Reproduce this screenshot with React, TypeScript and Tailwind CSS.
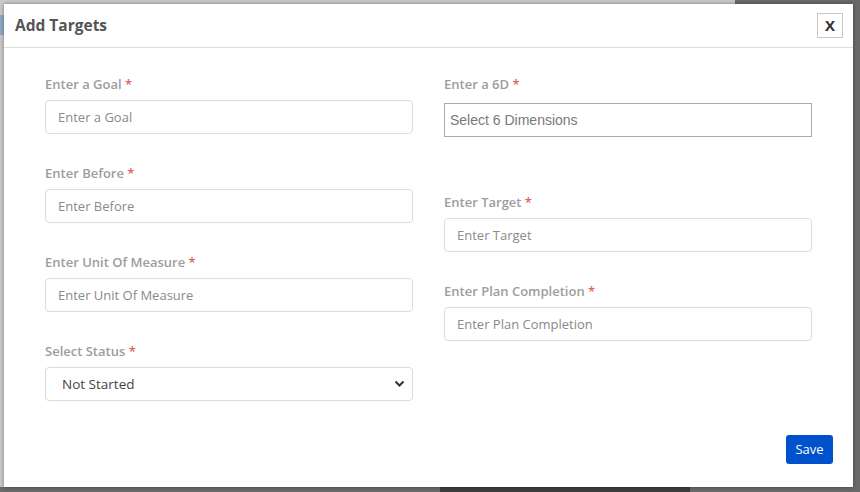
import React from "react";

const font = { fontFamily: '"Open Sans", "Noto Sans", Arial, sans-serif' };

function Label({ text }: { text: string }) {
  return (
    <label className="block h-[20px] text-[13px] leading-[20px] font-semibold text-[#9d9d9d] mb-[6px]">
      {text} <span className="text-[#e06262]">*</span>
    </label>
  );
}

function Field({ label, placeholder, className = "" }: { label: string; placeholder: string; className?: string }) {
  return (
    <div className={className}>
      <Label text={label} />
      <input
        placeholder={placeholder}
        className="block w-full h-[34px] rounded-[4px] border border-[#dcdcdc] px-[12px] text-[13px] text-[#555] placeholder:text-[#8a8a8a] outline-none"
      />
    </div>
  );
}

export default function App() {
  return (
    <div className="w-[860px] h-[492px] bg-[#6a6a6a] relative overflow-hidden" style={font}>
      <div className="absolute left-0 top-0 w-[735px] h-[487px] bg-[#c9c9c9]" />
      <div className="absolute left-0 top-[15px] w-[4px] h-[20px] bg-[#8fa9c4]" />
      <div className="absolute left-[440px] top-[487px] w-[250px] h-[5px] bg-[#3d3d3d]" />
      <div className="absolute left-[4px] top-[4px] w-[849px] h-[483px] bg-white shadow-[0_0_4px_rgba(0,0,0,0.4)] flex flex-col">
        <div className="h-[44px] border-b border-[#dedede] flex items-center justify-between pl-[11px] pr-[10px]">
          <h2 className="text-[15.5px] font-bold text-[#555]">Add Targets</h2>
          <button className="w-[26px] h-[25px] border border-[#c8c8c8] flex items-center justify-center text-[15px] font-bold text-[#333] leading-none">
            X
          </button>
        </div>
        <div className="flex-1 px-[41px] pt-[26px] grid grid-cols-2 gap-x-[31px] content-start">
          <div className="flex flex-col">
            <Field label="Enter a Goal" placeholder="Enter a Goal" className="mb-[29px]" />
            <Field label="Enter Before" placeholder="Enter Before" className="mb-[29px]" />
            <Field label="Enter Unit Of Measure" placeholder="Enter Unit Of Measure" className="mb-[29px]" />
            <div>
              <Label text="Select Status" />
              <div className="relative">
                <select className="block w-full h-[34px] rounded-[4px] border border-[#dcdcdc] pl-[16px] pr-[30px] text-[13.5px] text-[#444] bg-white appearance-none outline-none">
                  <option>Not Started</option>
                </select>
                <svg className="absolute right-[8px] top-[12px] pointer-events-none" width="11" height="9" viewBox="0 0 11 9">
                  <path d="M1.5 2.5 L5.5 6.5 L9.5 2.5" fill="none" stroke="#333" strokeWidth="2" />
                </svg>
              </div>
            </div>
          </div>
          <div className="flex flex-col">
            <div className="mb-[55px]">
              <Label text="Enter a 6D" />
              <div className="pt-[3px]">
                <input
                  placeholder="Select 6 Dimensions"
                  className="block w-full h-[34px] border border-[#a9a9a9] px-[5px] text-[14px] placeholder:text-[#7a7a7a] outline-none"
                  style={{ fontFamily: '"Liberation Sans", Arial, sans-serif' }}
                />
              </div>
            </div>
            <Field label="Enter Target" placeholder="Enter Target" className="mb-[29px]" />
            <Field label="Enter Plan Completion" placeholder="Enter Plan Completion" />
          </div>
        </div>
        <div className="flex justify-end pr-[20px] pb-[23px]">
          <button className="w-[47px] h-[29px] rounded-[3px] bg-[#0052cc] text-white text-[13px] pt-[1px]">Save</button>
        </div>
      </div>
    </div>
  );
}
